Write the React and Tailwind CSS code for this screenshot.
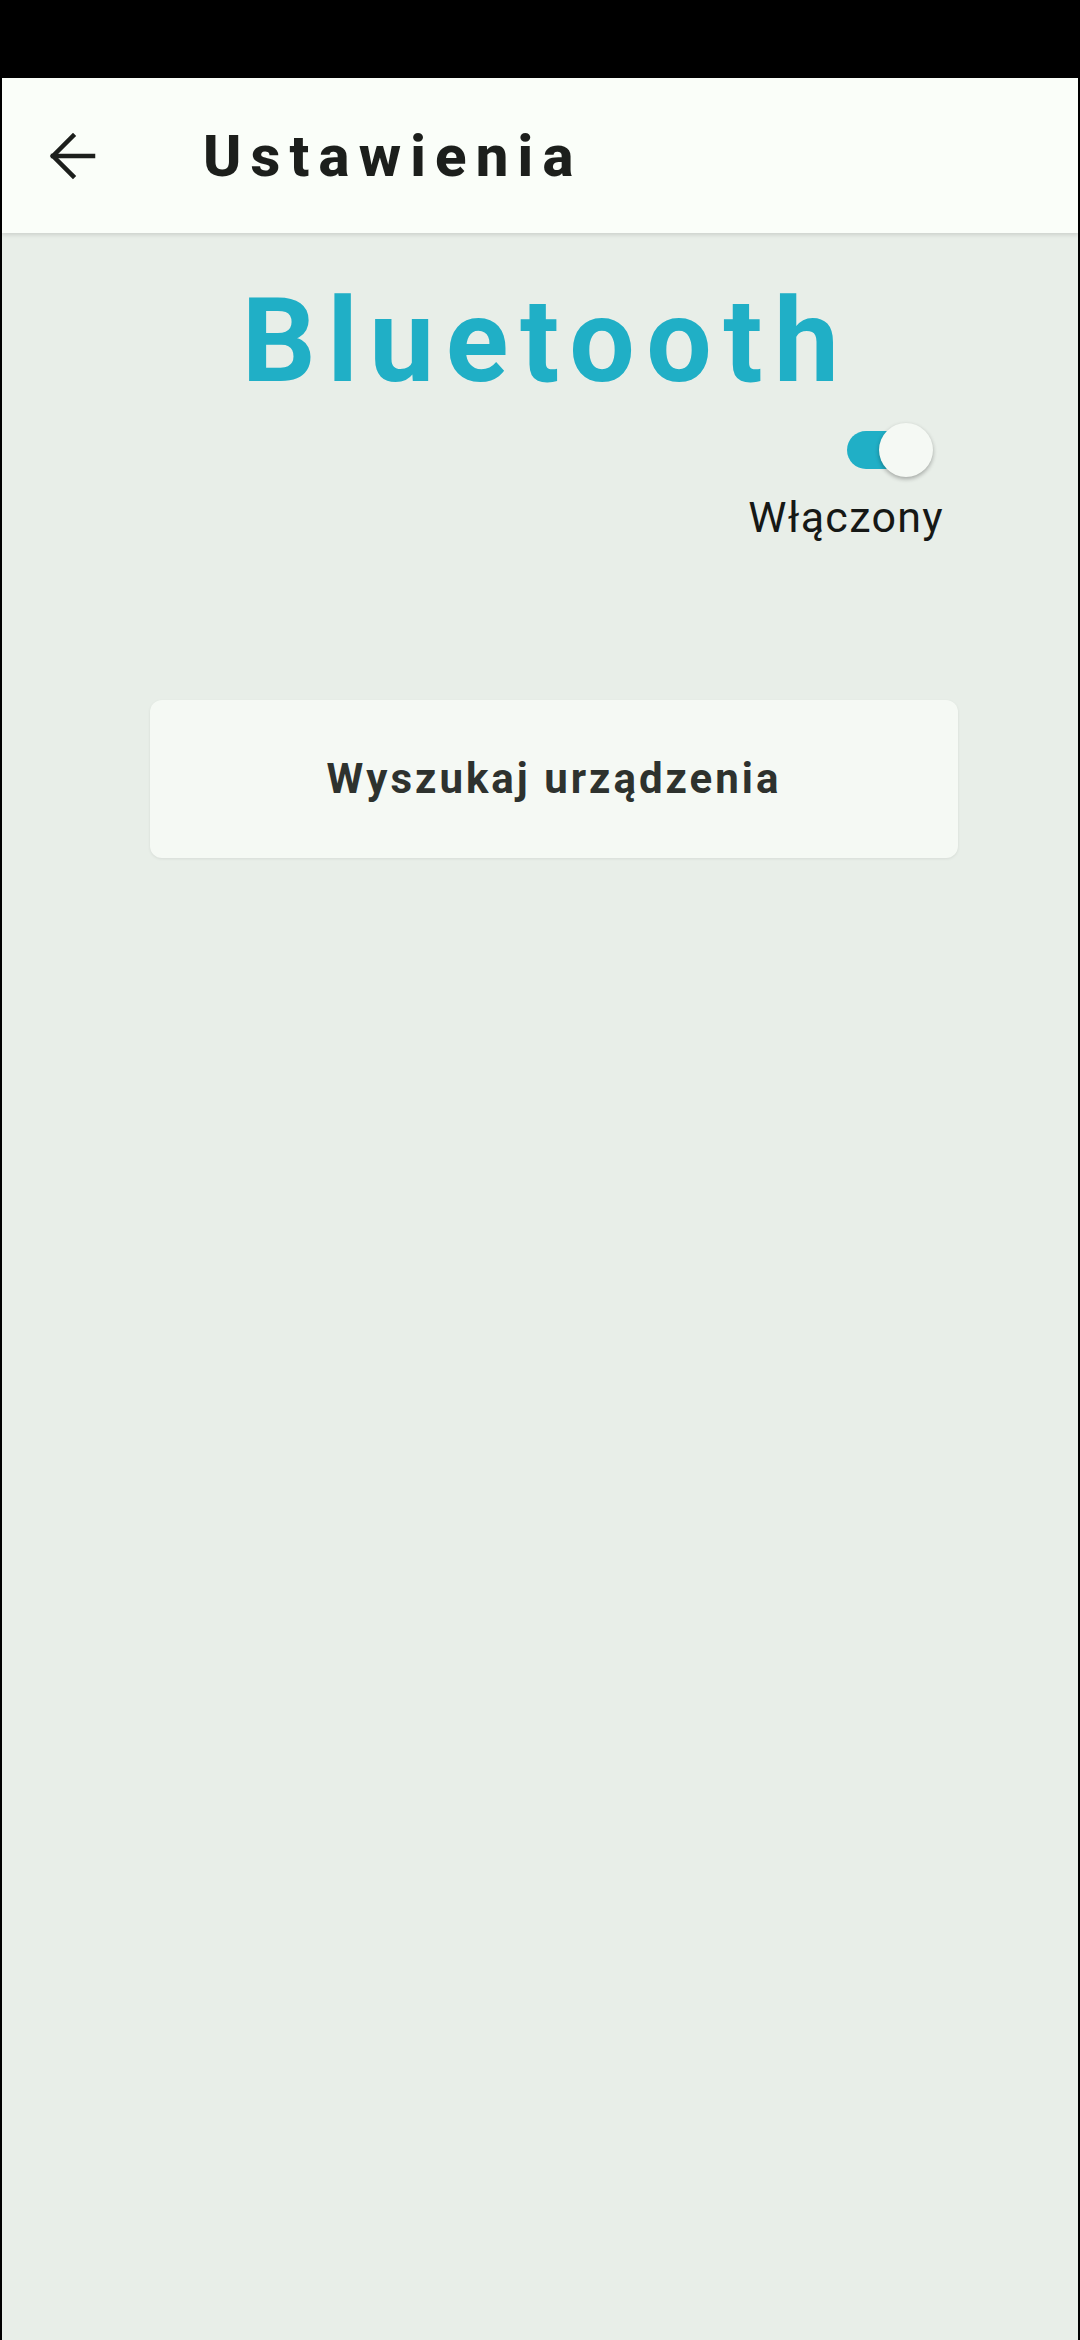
import React from "react";

export default function App() {
  return (
    <div className="w-[1080px] h-[2340px] bg-black flex flex-col px-[2px] overflow-hidden" style={{ fontFamily: "Roboto, 'Noto Sans', sans-serif" }}>
      <div className="h-[78px] shrink-0 bg-black" />
      <div className="flex-1 flex flex-col bg-[#E8EEE8]">
        <header className="relative z-10 h-[155px] shrink-0 bg-[#FAFEF9] flex items-center shadow-[0_2px_4px_rgba(0,0,0,0.12)]">
          <svg className="ml-[46px] w-[50px] h-[50px]" viewBox="0 0 50 50" fill="none" stroke="#1C1F1C" strokeWidth="4.5" strokeLinecap="square" strokeLinejoin="miter">
            <path d="M5 25H45" />
            <path d="M25 5L5 25L25 45" />
          </svg>
          <h1 className="ml-[105px] text-[58px] leading-none font-extrabold tracking-[9.2px] text-[#1C1F1C]">Ustawienia</h1>
        </header>

        <div className="mt-[50px] h-[116px] text-center text-[116px] leading-none font-bold tracking-[11.5px] pl-[12px] text-[#20AFC6]">
          Bluetooth
        </div>

        <div className="mt-[24px] flex justify-end pr-[145px]">
          <div className="relative w-[86px] h-[54px]">
            <div className="absolute left-0 top-[8px] w-[78px] h-[38px] rounded-full bg-[#20AFC6]" />
            <div className="absolute right-0 top-0 w-[54px] h-[54px] rounded-full bg-[#F5F9F4] shadow-[0_2px_4px_rgba(0,0,0,0.3)]" />
          </div>
        </div>

        <div className="mt-[19px] flex justify-end pr-[134px]">
          <span className="text-[43px] leading-none tracking-[1.3px] text-[#161816]">Włączony</span>
        </div>

        <button className="mt-[161px] ml-[148px] w-[808px] h-[158px] rounded-[12px] bg-[#F5F9F4] shadow-[0_1px_3px_rgba(0,0,0,0.08)] flex items-center justify-center">
          <span className="text-[42px] leading-none font-bold tracking-[3px] text-[#2E322E]">Wyszukaj urządzenia</span>
        </button>
      </div>
    </div>
  );
}
